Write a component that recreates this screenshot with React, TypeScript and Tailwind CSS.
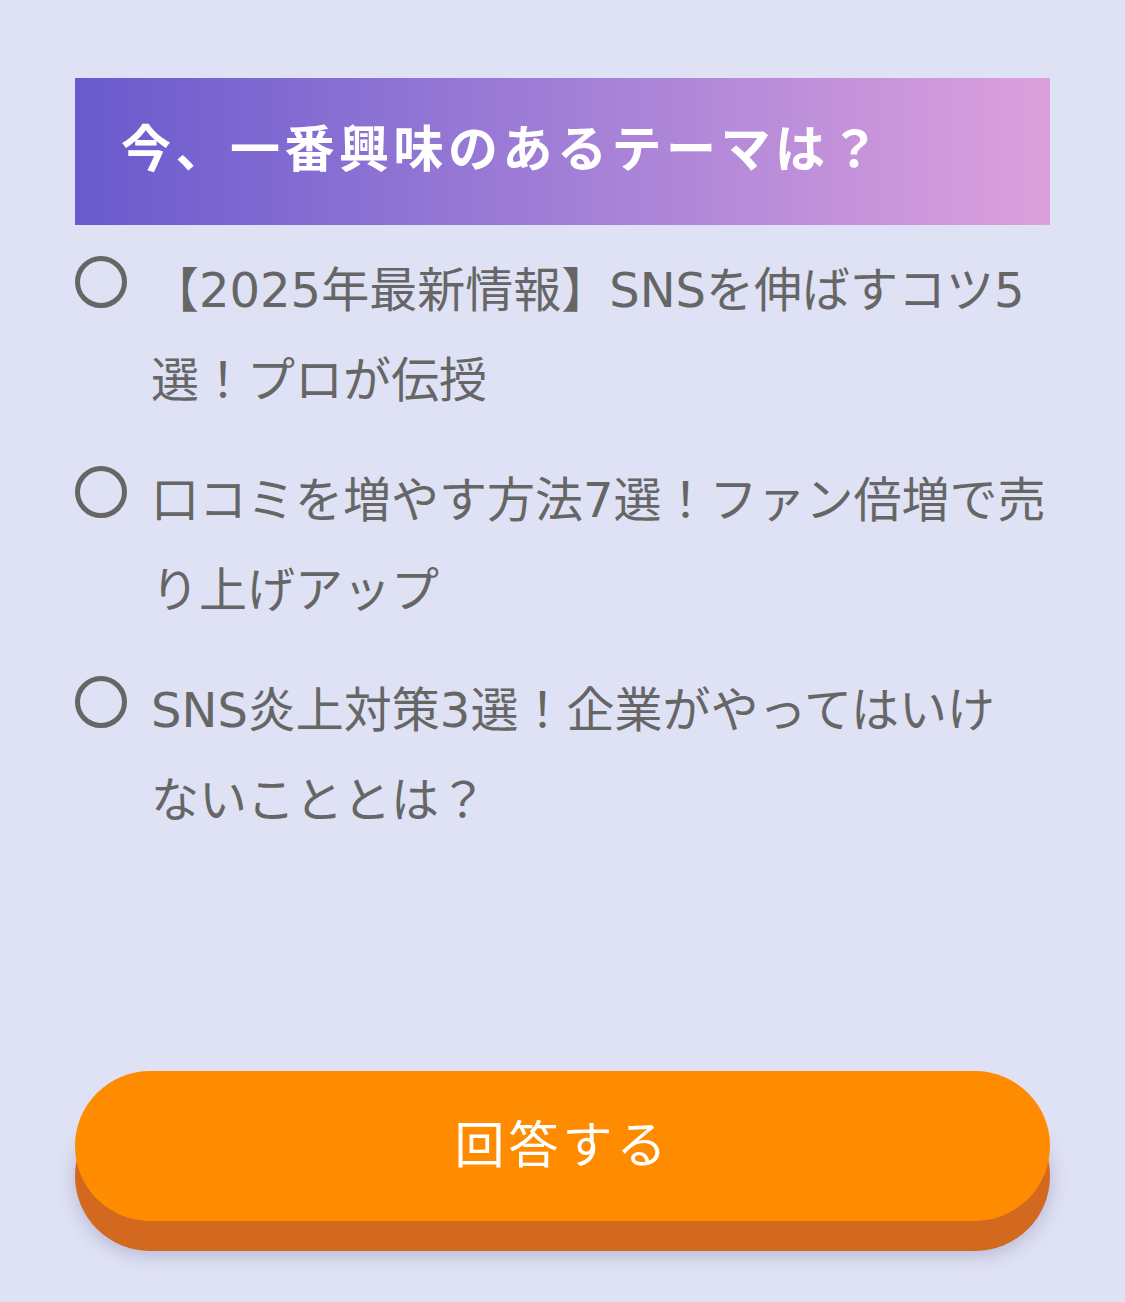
const options = [
  ['【2025年最新情報】SNSを伸ばすコツ5', '選！プロが伝授'],
  ['口コミを増やす方法7選！ファン倍増で売', 'り上げアップ'],
  ['SNS炎上対策3選！企業がやってはいけ', 'ないこととは？'],
];

export default function App() {
  return (
    <div
      className="min-h-[1302px] w-full bg-[#dfe1f4] px-[75px] pt-[78px] pb-[51px]"
      style={{ fontFamily: '"Liberation Sans", "Noto Sans CJK JP", sans-serif' }}
    >
      {/* Question */}
      <div className="flex h-[147px] items-center bg-gradient-to-r from-[#6a5acd] to-[#dda0dd] px-[46px] pb-[4px]">
        <h2 className="text-[50px] font-bold leading-none tracking-[4.5px] text-white">
          今、一番興味のあるテーマは？
        </h2>
      </div>

      {/* Choices */}
      <ul className="mt-[20px] flex flex-col gap-[30px]">
        {options.map(([first, rest]) => (
          <li key={first}>
            <label className="flex cursor-pointer items-start gap-[24px]">
              <span className="mt-[11px] h-[52px] w-[52px] shrink-0 rounded-full border-[5px] border-[#666666]" />
              <span
                className="text-[48px] leading-[90px] text-[#666666]"
                style={{ fontFamily: '"DejaVu Sans", "Noto Sans CJK JP", sans-serif' }}
              >
                {first}
                <br />
                {rest}
              </span>
            </label>
          </li>
        ))}
      </ul>

      {/* Submit */}
      <div className="mt-[226px]">
        <button className="flex h-[150px] w-full items-center justify-center rounded-full bg-[#ff8c00] text-[50px] tracking-[4px] text-white shadow-[0_30px_0_#d2691e,0_34px_18px_rgba(60,60,110,0.25)]">
          回答する
        </button>
      </div>
    </div>
  );
}
